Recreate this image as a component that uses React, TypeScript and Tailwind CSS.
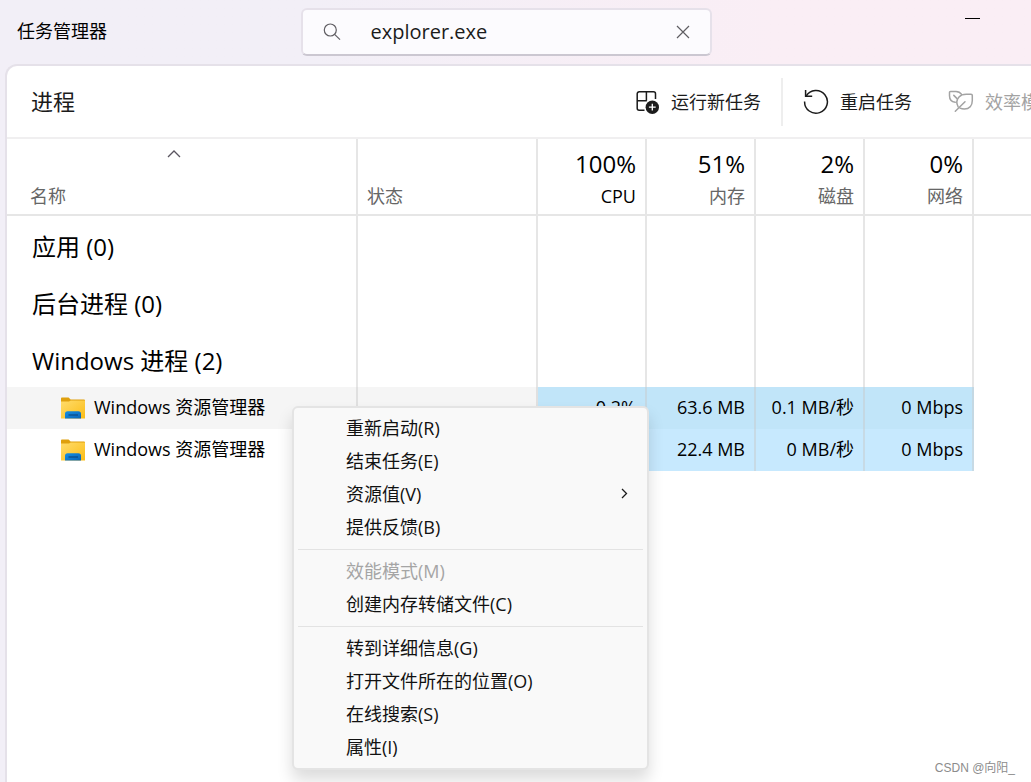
import type { ReactNode } from "react";

type Metric = {
  label: string;
  total: string;
  active?: boolean;
};

type ProcessRow = {
  id: number;
  name: string;
  values: string[];
  hovered?: boolean;
};

type MenuEntry = {
  label: string;
  disabled?: boolean;
  submenu?: boolean;
};

const metrics: Metric[] = [
  { label: "CPU", total: "100%", active: true },
  { label: "内存", total: "51%" },
  { label: "磁盘", total: "2%" },
  { label: "网络", total: "0%" },
];

const groups = ["应用 (0)", "后台进程 (0)", "Windows 进程 (2)"];

const processes: ProcessRow[] = [
  { id: 1, name: "Windows 资源管理器", values: ["0.2%", "63.6 MB", "0.1 MB/秒", "0 Mbps"], hovered: true },
  { id: 2, name: "Windows 资源管理器", values: ["0%", "22.4 MB", "0 MB/秒", "0 Mbps"] },
];

const menuSections: MenuEntry[][] = [
  [
    { label: "重新启动(R)" },
    { label: "结束任务(E)" },
    { label: "资源值(V)", submenu: true },
    { label: "提供反馈(B)" },
  ],
  [{ label: "效能模式(M)", disabled: true }, { label: "创建内存转储文件(C)" }],
  [
    { label: "转到详细信息(G)" },
    { label: "打开文件所在的位置(O)" },
    { label: "在线搜索(S)" },
    { label: "属性(I)" },
  ],
];

function SearchIcon() {
  return (
    <svg width="18" height="18" viewBox="0 0 18 18" fill="none" stroke="#5f5d62" strokeWidth="1.2">
      <circle cx="7.3" cy="7" r="6" />
      <path d="M11.6 11.3 17 16.7" />
    </svg>
  );
}

function CloseIcon() {
  return (
    <svg width="14" height="14" viewBox="0 0 14 14" fill="none" stroke="#5f5d62" strokeWidth="1.2">
      <path d="M1 1l12 12M13 1L1 13" />
    </svg>
  );
}

function NewTaskIcon() {
  return (
    <svg width="24" height="24" viewBox="0 0 24 24" fill="none" stroke="#1b1b1b" strokeWidth="1.5">
      <path d="M8.5 20.2H3.2a2 2 0 0 1-2-2V3.8a2 2 0 0 1 2-2h14.3a2 2 0 0 1 2 2V9" />
      <path d="M10.4 1.8v8.9M1.2 10.7h9.6" />
      <circle cx="16.3" cy="17.2" r="6.7" fill="#1b1b1b" stroke="none" />
      <path d="M16.3 13.8v6.8M12.9 17.2h6.8" stroke="#fff" strokeWidth="1.3" />
    </svg>
  );
}

function RestartIcon() {
  return (
    <svg width="26" height="26" viewBox="0 0 26 26" fill="none" stroke="#1b1b1b" strokeWidth="1.5">
      <path d="M2.6 1v6.2h6.6" />
      <path d="M3.2 7A11.4 11.4 0 1 1 1.6 12.5" />
    </svg>
  );
}

function LeafIcon() {
  return (
    <svg
      width="26"
      height="26"
      viewBox="0 0 26 26"
      fill="none"
      stroke="#a3a3a3"
      strokeWidth="1.5"
      strokeLinecap="round"
      strokeLinejoin="round"
    >
      <path d="M13.6 5.4C12.3 3.4 10.300 2.400 8 2.400H2.600c-.7 0-1.100.4-1.100 1.100v3.300c0 3.600 2 6 5.700 6.500" />
      <path d="M10.200 18C8.300 14.400 8.700 10.500 11 8c1.700-1.900 4.300-2.700 7.300-2.700h4.700c.8 0 1.300.5 1.300 1.300v4.900c0 5-2.800 8.500-8 8.500-1.600 0-3-.3-4.300-.9" />
      <path d="M7.300 22.300 17 12.800M5.800 6.400l3 3" />
    </svg>
  );
}

function FolderIcon() {
  return (
    <svg width="24" height="22" viewBox="0 0 24 22" className="shrink-0">
      <defs>
        <linearGradient id="folderBody" x1="0" y1="0" x2="1" y2="1">
          <stop offset="0" stopColor="#ffdc6c" />
          <stop offset="1" stopColor="#fbbd16" />
        </linearGradient>
        <linearGradient id="folderTray" x1="0" y1="0" x2="1" y2="1">
          <stop offset="0" stopColor="#1590e4" />
          <stop offset="1" stopColor="#0a63b5" />
        </linearGradient>
      </defs>
      <path d="M0 1.5C0 1 .5.5 1 .5h6.6l2 2H23a1 1 0 0 1 1 1V6H0z" fill="#dfa00d" />
      <path d="M0 4.5h8l1.800-1H24v18H0z" fill="url(#folderBody)" />
      <path d="M4 21.5v-4.700a2.600 2.600 0 0 1 2.600-2.600h10.800a2.600 2.600 0 0 1 2.600 2.600v4.700z" fill="url(#folderTray)" />
      <path d="M7.5 18h9.500" stroke="#0b4a86" strokeWidth="1.2" />
    </svg>
  );
}

function ToolButton({ icon, label, disabled }: { icon: ReactNode; label: string; disabled?: boolean }) {
  return (
    <button
      type="button"
      disabled={disabled}
      className="flex shrink-0 items-center gap-[11px] whitespace-nowrap text-lg text-[#1b1b1b] disabled:text-[#a3a3a3]"
    >
      {icon}
      {label}
    </button>
  );
}

function TitleBar() {
  return (
    <header className="flex h-16 items-start pr-[19px]">
      <div className="flex-1">
        <h1 className="pt-[17px] pl-[17px] text-lg text-black">任务管理器</h1>
      </div>
      <label className="mt-2 flex h-12 w-[411px] items-center rounded-md border-2 border-[#e6e1ea] border-b-[#cbc7d1] bg-[#fcfbfe] px-5">
        <SearchIcon />
        <input
          type="text"
          aria-label="搜索"
          defaultValue="explorer.exe"
          className="ml-[30px] min-w-0 flex-1 bg-transparent text-xl text-[#1b1b1b] outline-none"
        />
        <button type="button" aria-label="清除">
          <CloseIcon />
        </button>
      </label>
      <div className="flex flex-1 justify-end">
        <button type="button" aria-label="最小化" className="flex h-9 w-20 items-center justify-center">
          <span className="h-px w-[15px] bg-black" />
        </button>
      </div>
    </header>
  );
}

function Toolbar() {
  return (
    <div className="flex h-[73px] items-center justify-between border-b-2 border-[#f0eff0] pl-6">
      <h2 className="text-[22px] text-[#1b1b1b]">进程</h2>
      <div className="flex h-full w-[395px] items-center overflow-hidden">
        <ToolButton icon={<NewTaskIcon />} label="运行新任务" />
        <span className="mx-5 h-12 w-0.5 shrink-0 bg-[#eeeeee]" />
        <ToolButton icon={<RestartIcon />} label="重启任务" />
        <span className="w-9 shrink-0" />
        <ToolButton icon={<LeafIcon />} label="效率模式" disabled />
      </div>
    </div>
  );
}

function ContextMenu() {
  return (
    <div
      role="menu"
      className="absolute top-[267px] left-[285px] w-[357px] rounded-md border-2 border-[#e4e4e4] bg-[#f9f9f9] p-1 shadow-[0_10px_16px_rgba(0,0,0,0.14)]"
    >
      {menuSections.map((section, index) => (
        <div key={index}>
          {index > 0 && <hr className="my-[5px] border-t border-[#e3e3e3]" />}
          {section.map((entry) => (
            <button
              key={entry.label}
              type="button"
              role="menuitem"
              disabled={entry.disabled}
              className="flex h-[33px] w-full items-center justify-between pr-[15px] pb-0.5 pl-12 text-lg text-[#111111] disabled:text-[#a5a5a5]"
            >
              {entry.label}
              {entry.submenu && (
                <svg width="7" height="11" viewBox="0 0 7 11" fill="none" stroke="#1b1b1b" strokeWidth="1.3">
                  <path d="M1 1l4.500 4.500L1 10" />
                </svg>
              )}
            </button>
          ))}
        </div>
      ))}
    </div>
  );
}

function ProcessTable() {
  return (
    <table className="w-full table-fixed border-separate border-spacing-0">
      <colgroup>
        <col className="w-[351px]" />
        <col className="w-[180px]" />
        {metrics.map((metric) => (
          <col key={metric.label} className="w-[109px]" />
        ))}
        <col />
      </colgroup>
      <thead>
        <tr className="h-[77px] text-lg text-[#666666]">
          <th className="border-r-2 border-b-2 border-[#c8c8c8]/45 p-0 font-normal">
            <div className="flex h-[75px] flex-col items-center justify-between pt-[11px] pr-4 pb-1">
              <svg width="14" height="8" viewBox="0 0 14 8" fill="none" stroke="#5a5560" strokeWidth="1.3">
                <path d="M1 7l6-6 6 6" />
              </svg>
              <span className="self-start pl-[23px]">名称</span>
            </div>
          </th>
          <th className="border-r-2 border-b-2 border-[#c8c8c8]/45 px-[9px] pb-1 text-left align-bottom font-normal">
            状态
          </th>
          {metrics.map((metric) => (
            <th
              key={metric.label}
              className="border-r-2 border-b-2 border-[#c8c8c8]/45 pr-[9px] pb-1 text-right align-bottom font-normal"
            >
              <div className="text-2xl leading-9 text-black">{metric.total}</div>
              <div className={metric.active ? "text-black" : ""}>{metric.label}</div>
            </th>
          ))}
          <th className="border-b-2 border-[#c8c8c8]/45" />
        </tr>
      </thead>
      <tbody>
        {groups.map((group) => (
          <tr key={group} className="h-[57px]">
            <td className="border-r-2 border-[#c8c8c8]/45 pt-1 pr-0 pb-0 pl-[25px] text-2xl whitespace-nowrap text-black">
              {group}
            </td>
            <td className="border-r-2 border-[#c8c8c8]/45" />
            {metrics.map((metric) => (
              <td key={metric.label} className="border-r-2 border-[#c8c8c8]/45" />
            ))}
            <td />
          </tr>
        ))}
        {processes.map((row) => (
          <tr key={row.id} className="h-[42px] text-lg text-black">
            <td className={`border-r-2 border-[#c8c8c8]/45 p-0 ${row.hovered ? "bg-[#f5f5f5]" : ""}`}>
              <div className="flex items-center gap-[9px] pl-[54px] whitespace-nowrap">
                <FolderIcon />
                <span className="pb-0.5">{row.name}</span>
              </div>
            </td>
            <td className={`border-r-2 border-[#c8c8c8]/45 ${row.hovered ? "bg-[#f5f5f5]" : ""}`} />
            {row.values.map((value, index) => (
              <td
                key={index}
                className={`border-r-2 border-[#c8c8c8]/45 pt-0 pr-[9px] pb-0.5 pl-0 text-right whitespace-nowrap ${
                  row.hovered ? "bg-[#c1e5f9]" : "bg-[#c7e9fe]"
                }`}
              >
                {value}
              </td>
            ))}
            <td />
          </tr>
        ))}
      </tbody>
    </table>
  );
}

export default function App() {
  return (
    <div className="relative flex min-h-screen flex-col overflow-hidden bg-linear-to-r from-[#f2eff7] from-30% to-[#faeef5] to-75% font-['Open_Sans','Noto_Sans_CJK_SC',sans-serif]">
      <TitleBar />
      <main className="ml-[5px] flex-1 rounded-tl-xl border-t-2 border-l-2 border-[#e5e1e9] bg-white">
        <Toolbar />
        <div className="relative">
          <ProcessTable />
          <ContextMenu />
        </div>
      </main>
      <p className="absolute right-4 bottom-1.5 font-['Liberation_Sans','Noto_Sans_CJK_SC',sans-serif] text-xs text-[#8c8c8c]">
        CSDN @向阳_
      </p>
    </div>
  );
}
